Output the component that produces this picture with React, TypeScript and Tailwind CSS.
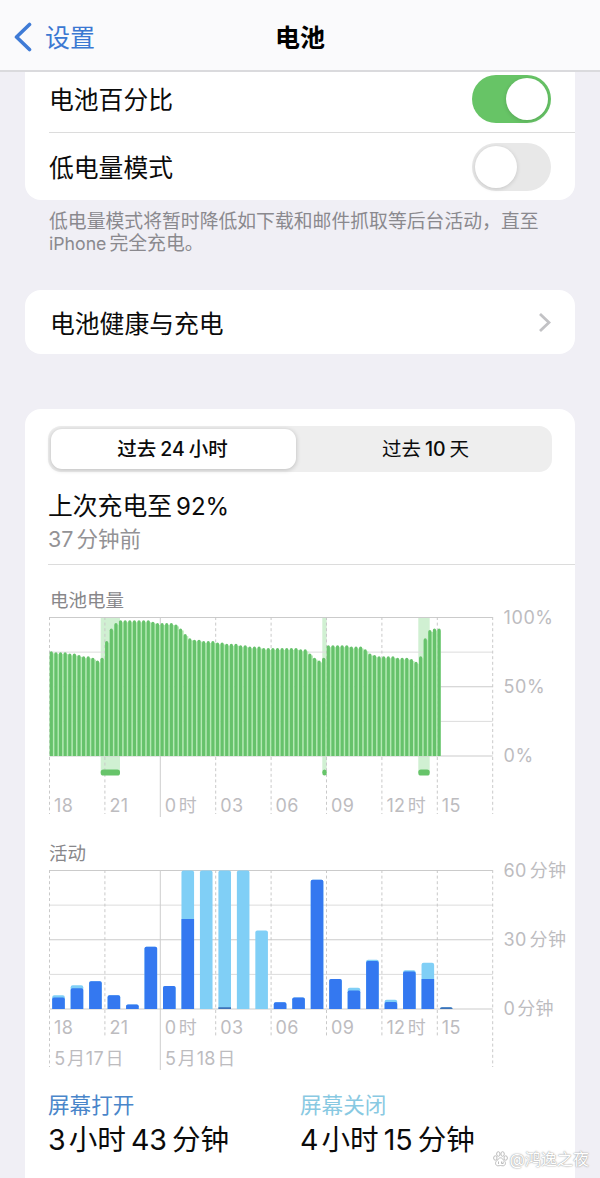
import type { ReactNode } from "react";

const batteryLevels = [
  75.6, 75, 75, 75, 74, 74, 73, 72, 72, 71, 69, 71, 83, 92, 96, 98, 98, 98, 98,
  98, 98, 98, 97, 96, 96, 96, 96, 95, 92, 88, 85, 84, 84, 83, 83, 83, 82, 82,
  81, 81, 81, 80, 80, 79, 79, 79, 78, 78, 78, 78, 78, 78, 78, 78, 77, 77, 74,
  71, 69, 71, 80, 80, 80, 80, 80, 79, 79, 79, 77, 74, 73, 72, 72, 72, 72, 71,
  71, 71, 70, 68, 72, 85, 91, 92, 92,
];

// [start, width] of every charging period, in chart pixels
const charging = [
  [52.7, 19.3],
  [274.3, 4.4],
  [370.3, 11.4],
];

// [minutes with the screen on, total minutes] for every hour
const activity = [
  [5, 6], [9, 10.3], [12, 12], [6, 6], [2, 2], [27, 27],
  [10, 10], [39, 60], [0, 60], [0.8, 60], [0, 60], [0, 34],
  [2.9, 2.9], [5, 5], [56, 56], [13, 13], [8, 9.2], [20.8, 21.3],
  [3, 4], [16.2, 16.8], [13, 20], [0.8, 0.8],
];

const hours = ["18", "21", "0", "03", "06", "09", "12", "15"];

const START = 1.5;
const STEP = 55.4;
const HEIGHT = 138.5;

const Grid = ({ bottoms }: { bottoms: number[] }) => {
  return (
    <g>
      {[0, 1, 2, 3, 4].map((i) => (
        <line
          key={i}
          x1={START}
          x2={START + STEP * 8}
          y1={0.5 + (HEIGHT / 4) * i}
          y2={0.5 + (HEIGHT / 4) * i}
          stroke={i % 2 ? "#dcdcdc" : "#cbcbcb"}
        />
      ))}
      {bottoms.map((bottom, i) => (
        <line
          key={i}
          x1={START + STEP * i}
          x2={START + STEP * i}
          y1={0}
          y2={bottom}
          stroke={i === 2 ? "#cecece" : "#c9c9c9"}
          strokeDasharray={i === 2 ? undefined : "3 2.6"}
        />
      ))}
    </g>
  );
};

const HourLabels = ({ y }: { y: number }) => {
  return (
    <g className="fill-[#bdbcbf] text-[18px] tracking-[0.4px]">
      {hours.map((hour, i) => (
        <text key={hour} x={START + STEP * i + 4.5} y={y}>
          {hour}
          {(hour === "0" || hour === "12") && <tspan dx="2.2">时</tspan>}
        </text>
      ))}
    </g>
  );
};

const BatteryChart = () => {
  return (
    <svg className="block overflow-visible" width="527" height="203" viewBox="0 0 527 203">
      {charging.map(([x, w]) => (
        <rect key={x} x={x} y="0" width={w} height="156" fill="#d0f0d2" />
      ))}
      <Grid bottoms={[197, 197, 200, 197, 197, 197, 197, 197, 197]} />
      {batteryLevels.map((level, i) => {
        const h = (level / 100) * HEIGHT;
        const x = 1.7 + (STEP / 12) * i;
        const y = 139 - h;
        return (
          <g key={i}>
            <rect x={x} y={y + 2} width={i < 84 ? 4.7 : 3.2} height={h - 2} fill="#b4eab4" />
            <path
              d={`M${x} 139V${y + 1.6}a1.6 1.6 0 0 1 3.2 0V139z`}
              fill="#66c26b"
            />
          </g>
        );
      })}
      {charging.map(([x, w]) => (
        <rect key={x} x={x} y="152.5" width={w} height="6" rx="2.6" fill="#67c46a" />
      ))}
      <HourLabels y={194.7} />
      <g className="fill-[#bdbcbf] text-[18px] tracking-[0.6px]">
        <text x="455.5" y="7.2">100%</text>
        <text x="455.5" y="76.3">50%</text>
        <text x="455.5" y="145.3">0%</text>
      </g>
    </svg>
  );
};

const ActivityChart = () => {
  return (
    <svg className="block overflow-visible" width="527" height="202" viewBox="0 0 527 202">
      <Grid bottoms={[197, 167, 200, 167, 167, 167, 167, 167, 197]} />
      {activity.map(([on, total], i) => {
        const x = 4.2 + (STEP / 3) * i;
        const h = (total / 60) * HEIGHT;
        const dark = (on / 60) * HEIGHT;
        const r = Math.min(2, h);
        const rd = total - on > 2 ? 0 : Math.min(1.8, dark);
        return (
          <g key={i}>
            <path
              d={`M${x} 139v${r - h}q0 ${-r} ${r} ${-r}h${12.6 - 2 * r}q${r} 0 ${r} ${r}v${h - r}z`}
              fill="#80cff6"
            />
            {on > 0 && (
              <path
                d={`M${x} 139v${rd - dark}q0 ${-rd} ${rd} ${-rd}h${12.6 - 2 * rd}q${rd} 0 ${rd} ${rd}v${dark - rd}z`}
                fill={on < 1 ? "#3d72b8" : "#3478f0"}
              />
            )}
          </g>
        );
      })}
      <HourLabels y={164} />
      <g className="fill-[#bdbcbf] text-[18px] tracking-[0.3px]">
        <text x="6.3" y="195">
          5<tspan dx="1.5">月</tspan><tspan dx="0.5">17</tspan><tspan dx="1.5">日</tspan>
        </text>
        <text x="117.1" y="195">
          5<tspan dx="1.5">月</tspan><tspan dx="0.5">18</tspan><tspan dx="1.5">日</tspan>
        </text>
        <text x="455.5" y="7">
          60<tspan dx="3">分钟</tspan>
        </text>
        <text x="455.5" y="76">
          30<tspan dx="3">分钟</tspan>
        </text>
        <text x="455.5" y="145">
          0<tspan dx="2">分钟</tspan>
        </text>
      </g>
    </svg>
  );
};

const Switch = ({ on }: { on?: boolean }) => {
  return (
    <div
      className={
        on
          ? "flex h-12 w-[79px] items-center justify-end rounded-full bg-[#67c466] px-[3px]"
          : "flex h-12 w-[79px] items-center rounded-full bg-[#e8e8e8] px-[3px]"
      }
    >
      <div className="size-[42px] rounded-full bg-white shadow-[0_1px_4px_rgba(0,0,0,0.15)]" />
    </div>
  );
};

const Total = ({ label, color, children }: { label: string; color: string; children: ReactNode }) => {
  return (
    <div className="w-[252px]">
      <p className={`text-[21.6px] leading-[30px] ${color}`}>{label}</p>
      <p className="mt-0.5 text-[28.6px] leading-9 whitespace-nowrap">{children}</p>
    </div>
  );
};

const App = () => {
  return (
    <div className="relative flex h-[1178px] w-[600px] flex-col overflow-hidden bg-[#f0eff5] font-['Inter','Noto_Sans_CJK_SC',sans-serif] text-[#0b0b0b]">
      <header className="grid h-[71.5px] shrink-0 grid-cols-3 items-center border-b-2 border-[#dadadd] bg-[#fafafc] pt-1">
        <div className="flex items-center text-[25px] text-[#3b78d2]">
          <svg className="ml-[14px] mr-[13px]" width="18" height="30" viewBox="0 0 18 30" fill="none">
            <path d="M15.5 2.5 2.5 15l13 12.5" stroke="#3f7bd6" strokeWidth="3.6" strokeLinecap="round" strokeLinejoin="round" />
          </svg>
          <span className="pt-[3px]">设置</span>
        </div>
        <h1 className="pt-[3px] text-center text-[25px] font-semibold text-black">电池</h1>
      </header>

      <section className="mx-[25px] h-[128.5px] shrink-0 rounded-b-2xl bg-white pl-6 text-[24.8px]">
        <div className="flex h-[61px] items-center justify-between border-b border-[#dcdcdc] pr-6 pb-[5px]">
          <span className="pt-1">电池百分比</span>
          <Switch on />
        </div>
        <div className="flex h-[68px] items-center justify-between pr-6">
          <span className="pt-[5px]">低电量模式</span>
          <Switch />
        </div>
      </section>
      <p className="ml-[49px] mt-[11px] h-11 shrink-0 text-[18.83px] leading-[21.5px] whitespace-nowrap text-[#8a898e]">
        低电量模式将暂时降低如下载和邮件抓取等后台活动，直至
        <br />
        <span className="mr-[3px] text-[17.7px]">iPhone</span>完全充电。
      </p>

      <section className="mx-[25px] mt-[35px] flex h-16 shrink-0 items-center justify-between rounded-2xl bg-white pl-[25px] pr-6 text-[24.8px]">
        <span className="pt-[5px]">电池健康与充电</span>
        <svg width="13" height="21" viewBox="0 0 13 21" fill="none">
          <path d="m2 2 9 8.5L2 19" stroke="#c2c2c5" strokeWidth="2.8" />
        </svg>
      </section>

      <section className="mx-[25px] mt-[55px] flex flex-1 flex-col rounded-t-2xl bg-white pl-[23px] pt-[17px]">
        <div className="flex h-[46px] w-[504px] shrink-0 rounded-[13px] bg-[#eeeeee] p-[3px] text-[19.5px]">
          <div className="flex w-[245px] items-center justify-center rounded-[11px] bg-white pt-[2px] pr-0.5 font-medium shadow-[0_1px_5px_rgba(0,0,0,0.22)]">
            过去<span className="mx-1">24</span>小时
          </div>
          <div className="flex flex-1 items-center justify-center pt-[2px] pl-1.5">
            过去<span className="mx-1 font-medium">10</span>天
          </div>
        </div>
        <div className="mt-4 h-[77px] shrink-0 border-b border-[#dcdcdc]">
          <p className="text-[24.8px] leading-9">
            上次充电至<span className="ml-1 text-[24px]">92%</span>
          </p>
          <p className="text-[21.5px] leading-7 text-[#939295]">
            <span className="mr-[3px]">37</span>分钟前
          </p>
        </div>

        <h2 className="mt-[21px] ml-0.5 h-[31px] shrink-0 text-[18.5px] leading-[29px] text-[#88878a]">电池电量</h2>
        <BatteryChart />
        <h2 className="mt-5 ml-px h-[30px] shrink-0 text-[18.5px] leading-[27px] text-[#88878a]">活动</h2>
        <ActivityChart />

        <div className="mt-[18px] flex shrink-0">
          <Total label="屏幕打开" color="text-[#4a86ca]">
            3<span className="mx-[3px]">小时</span>
            <span className="ml-0.5 mr-[5px]">43</span>
            <span>分钟</span>
          </Total>
          <Total label="屏幕关闭" color="text-[#88c9e2]">
            4<span className="mx-[3px]">小时</span>
            <span className="ml-0.5 mr-[5px]">15</span>
            <span>分钟</span>
          </Total>
        </div>
      </section>

      <div className="absolute right-[11px] bottom-[9px] flex items-center text-[16px] leading-5 text-white [text-shadow:0_0_1px_#999,0_0_2px_#aaa]">
        <svg className="mr-0.5" width="15" height="16" viewBox="0 0 15 16" fill="#fff" stroke="#b5b5b5" strokeWidth="0.9">
          <ellipse cx="2.3" cy="7" rx="1.7" ry="2.2" />
          <ellipse cx="5.3" cy="3" rx="1.7" ry="2.3" />
          <ellipse cx="9.6" cy="3" rx="1.7" ry="2.3" />
          <ellipse cx="12.7" cy="7" rx="1.7" ry="2.2" />
          <path d="M7.5 6.8c-2 0-2.5 2-4 3.3-1.7 1.5-1 4.5 1.2 4.7 1.3.1 1.8-.3 2.8-.3s1.5.4 2.8.3c2.2-.2 2.9-3.2 1.2-4.7-1.5-1.3-2-3.3-4-3.3z" />
          <path d="M5.5 10.5v2.5M8.5 10.5v2h1.7v-2" fill="none" />
        </svg>
        @鸿逸之夜
      </div>
    </div>
  );
};

export default App;
